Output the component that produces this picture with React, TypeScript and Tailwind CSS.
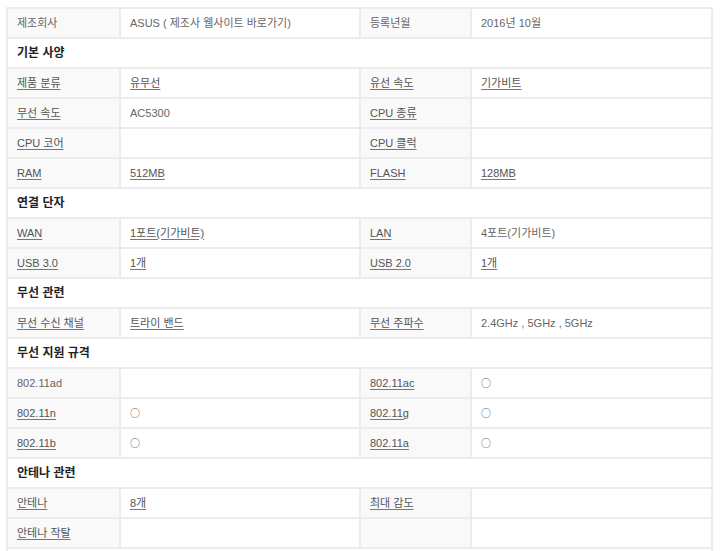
import React from "react";

type Cell = { text: string; link?: boolean };
type Row =
  | { kind: "section"; title: string }
  | { kind: "row"; cells: [Cell, Cell, Cell, Cell] };

const t = (text: string): Cell => ({ text });
const u = (text: string): Cell => ({ text, link: true });
const e: Cell = { text: "" };
const O: Cell = { text: "○" };

const ROWS: Row[] = [
  { kind: "row", cells: [t("제조회사"), t("ASUS ( 제조사 웹사이트 바로가기)"), t("등록년월"), t("2016년 10월")] },
  { kind: "section", title: "기본 사양" },
  { kind: "row", cells: [u("제품 분류"), u("유무선"), u("유선 속도"), u("기가비트")] },
  { kind: "row", cells: [u("무선 속도"), t("AC5300"), u("CPU 종류"), e] },
  { kind: "row", cells: [u("CPU 코어"), e, u("CPU 클럭"), e] },
  { kind: "row", cells: [u("RAM"), u("512MB"), u("FLASH"), u("128MB")] },
  { kind: "section", title: "연결 단자" },
  { kind: "row", cells: [u("WAN"), u("1포트(기가비트)"), u("LAN"), t("4포트(기가비트)")] },
  { kind: "row", cells: [u("USB 3.0"), u("1개"), u("USB 2.0"), u("1개")] },
  { kind: "section", title: "무선 관련" },
  { kind: "row", cells: [u("무선 수신 채널"), u("트라이 밴드"), u("무선 주파수"), t("2.4GHz , 5GHz , 5GHz")] },
  { kind: "section", title: "무선 지원 규격" },
  { kind: "row", cells: [t("802.11ad"), e, u("802.11ac"), O] },
  { kind: "row", cells: [u("802.11n"), O, u("802.11g"), O] },
  { kind: "row", cells: [u("802.11b"), O, u("802.11a"), O] },
  { kind: "section", title: "안테나 관련" },
  { kind: "row", cells: [u("안테나"), u("8개"), u("최대 감도"), e] },
  { kind: "row", cells: [u("안테나 작탈"), e, e, e] },
  { kind: "section", title: "" },
];

function CellText({ cell }: { cell: Cell }) {
  if (!cell.text) return null;
  if (cell.text === "○") {
    return <span className="font-['Noto_Sans_CJK_KR',sans-serif] text-[10px] leading-none text-[#555]">○</span>;
  }
  if (cell.link) {
    return <a className="text-[#555] underline underline-offset-2 decoration-[#777]">{cell.text}</a>;
  }
  return <span>{cell.text}</span>;
}

export default function App() {
  return (
    <div className="bg-white h-[551px] overflow-hidden pt-[7px] pl-[6px] font-['Liberation_Sans','Noto_Sans_CJK_KR',sans-serif]">
      <table className="w-[705px] table-fixed border-collapse text-[11px] text-[#666]">
        <colgroup>
          <col className="w-[113px]" />
          <col className="w-[240px]" />
          <col className="w-[111px]" />
          <col className="w-[241px]" />
        </colgroup>
        <tbody>
          {ROWS.map((row, i) =>
            row.kind === "section" ? (
              <tr key={i} className="h-[30px]">
                <td colSpan={4} className="border-2 border-[#ececec] px-[9px] text-[12px] font-bold text-[#222]">
                  {row.title}
                </td>
              </tr>
            ) : (
              <tr key={i} className="h-[30px]">
                {row.cells.map((cell, j) => (
                  <td
                    key={j}
                    className={`border-2 border-[#ececec] px-[9px] whitespace-nowrap ${
                      j % 2 === 0 ? "bg-[#f9f9f9]" : "bg-white"
                    }`}
                  >
                    <CellText cell={cell} />
                  </td>
                ))}
              </tr>
            )
          )}
        </tbody>
      </table>
    </div>
  );
}
